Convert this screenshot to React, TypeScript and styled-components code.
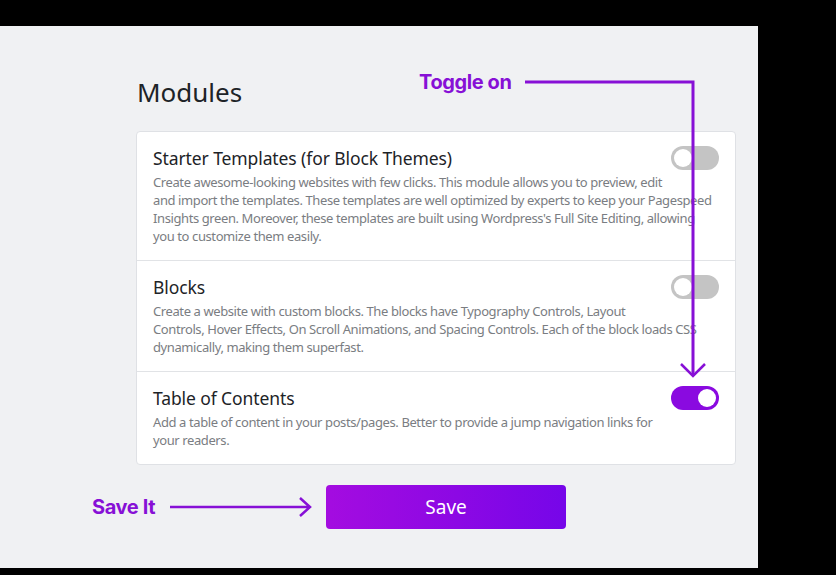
import styled, { createGlobalStyle } from "styled-components";
import { useState } from "react";

const Global = createGlobalStyle`
  html, body {
    margin: 0;
    padding: 0;
    background: #000000;
  }
  body {
    font-family: "Noto Sans", "Open Sans", sans-serif;
  }
`;

const Page = styled.div`
  width: 836px;
  height: 575px;
  padding-top: 26px;
  box-sizing: border-box;
  overflow: hidden;
`;

const Panel = styled.div`
  position: relative;
  width: 758px;
  height: 542px;
  background: #f0f1f3;
  box-sizing: border-box;
  padding: 51px 22px 0 136px;
`;

const Heading = styled.h2`
  margin: 0 0 24px 1px;
  font-size: 26px;
  line-height: 30px;
  font-weight: 400;
  color: #1d2327;
`;

const Card = styled.div`
  width: 600px;
  background: #ffffff;
  border: 1px solid #dfe1e5;
  border-radius: 4px;
  box-sizing: border-box;
`;

const Row = styled.div`
  padding: 14px 16px 15px 16px;
  & + & {
    border-top: 1px solid #e1e3e6;
  }
`;

const RowHead = styled.div`
  display: flex;
  align-items: center;
  justify-content: space-between;
  height: 24px;
`;

const Title = styled.div`
  font-size: 17.5px;
  line-height: 24px;
  letter-spacing: -0.1px;
  color: #1d2327;
`;

const Desc = styled.p`
  margin: 3px 0 0;
  font-size: 13px;
  line-height: 18px;
  letter-spacing: -0.4px;
  color: #7a7d82;
  white-space: nowrap;
`;

const Toggle = styled.button<{ $on: boolean }>`
  position: relative;
  width: 48px;
  height: 24px;
  border: none;
  border-radius: 12px;
  padding: 0;
  cursor: pointer;
  background: ${(p) => (p.$on ? "#8a0ae0" : "#c4c4c4")};
  &::after {
    content: "";
    position: absolute;
    top: 3px;
    left: ${(p) => (p.$on ? "27px" : "3px")};
    width: 18px;
    height: 18px;
    border-radius: 50%;
    background: #ffffff;
  }
`;

const Footer = styled.div`
  display: flex;
  align-items: center;
  margin: 20px 0 0 -44px;
`;

const Note = styled.span`
  font-family: Inter, "Liberation Sans", sans-serif;
  font-weight: 700;
  font-size: 20px;
  letter-spacing: -0.4px;
  color: #8710d6;
  white-space: nowrap;
`;

const ArrowRight = styled.svg`
  margin-left: 13px;
  flex: none;
`;

const SaveButton = styled.button`
  width: 240px;
  height: 44px;
  margin-left: 12px;
  border: none;
  border-radius: 4px;
  background: linear-gradient(90deg, #a40ce0 0%, #8c08e4 55%, #7606e9 100%);
  color: #ffffff;
  font-family: "Noto Sans", "Open Sans", sans-serif;
  font-size: 19px;
  cursor: pointer;
`;

const Callout = styled.div`
  position: absolute;
  left: 419px;
  top: 44px;
  pointer-events: none;
`;

const CalloutLines = styled.svg`
  position: absolute;
  left: 0;
  top: 0;
  overflow: visible;
`;

type Module = { title: string; lines: string[]; on: boolean };

const modules: Module[] = [
  {
    title: "Starter Templates (for Block Themes)",
    lines: [
      "Create awesome-looking websites with few clicks. This module allows you to preview, edit",
      "and import the templates. These templates are well optimized by experts to keep your Pagespeed",
      "Insights green. Moreover, these templates are built using Wordpress's Full Site Editing, allowing",
      "you to customize them easily.",
    ],
    on: false,
  },
  {
    title: "Blocks",
    lines: [
      "Create a website with custom blocks. The blocks have Typography Controls, Layout",
      "Controls, Hover Effects, On Scroll Animations, and Spacing Controls. Each of the block loads CSS",
      "dynamically, making them superfast.",
    ],
    on: false,
  },
  {
    title: "Table of Contents",
    lines: [
      "Add a table of content in your posts/pages. Better to provide a jump navigation links for",
      "your readers.",
    ],
    on: true,
  },
];

export default function App() {
  const [state, setState] = useState(modules.map((m) => m.on));
  return (
    <Page>
      <Global />
      <Panel>
        <Heading>Modules</Heading>
        <Card>
          {modules.map((m, i) => (
            <Row key={m.title}>
              <RowHead>
                <Title>{m.title}</Title>
                <Toggle
                  $on={state[i]}
                  aria-label={m.title}
                  onClick={() =>
                    setState((pre) => pre.map((v, j) => (j === i ? !v : v)))
                  }
                />
              </RowHead>
              <Desc>
                {m.lines.map((l, k) => (
                  <span key={k}>
                    {l}
                    {k < m.lines.length - 1 && <br />}
                  </span>
                ))}
              </Desc>
            </Row>
          ))}
        </Card>
        <Footer>
          <Note>Save It</Note>
          <ArrowRight width="146" height="24" viewBox="0 0 146 24">
            <path d="M2 12H142M132 3L142 12L132 21" fill="none" stroke="#8710d6" strokeWidth="2.5" />
          </ArrowRight>
          <SaveButton>Save</SaveButton>
        </Footer>
        <Callout>
          <Note>Toggle on</Note>
          <CalloutLines width="280" height="340">
            <path d="M106 12H274V306" fill="none" stroke="#8710d6" strokeWidth="3" />
            <path d="M262 294L274 306L286 294" fill="none" stroke="#8710d6" strokeWidth="2.5" />
          </CalloutLines>
        </Callout>
      </Panel>
    </Page>
  );
}
